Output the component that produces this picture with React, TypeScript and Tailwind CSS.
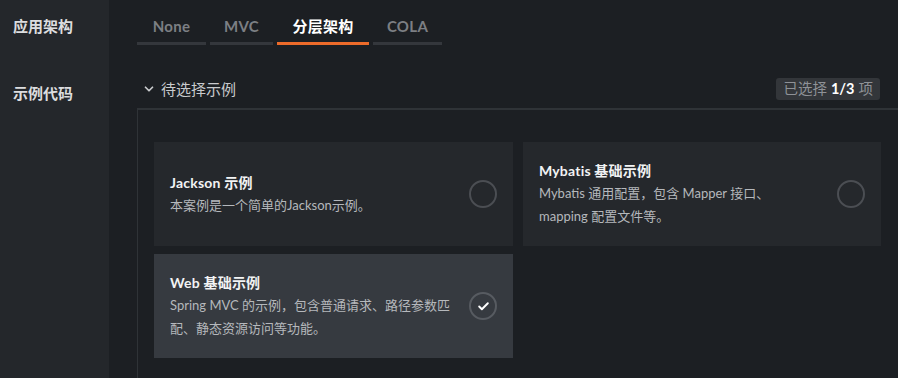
import { Check, ChevronDown } from "lucide-react";

const FONT = "font-['Lato','Noto_Sans_CJK_SC',sans-serif]";

type Example = {
  title: string;
  lines: string[];
  selected?: boolean;
};

const tabs = [
  { label: "None", w: "w-[69px]" },
  { label: "MVC", w: "w-[63px]" },
  { label: "分层架构", w: "w-[92px]", active: true },
  { label: "COLA", w: "w-[69px]" },
];

const examples: Example[] = [
  { title: "Jackson 示例", lines: ["本案例是一个简单的Jackson示例。"] },
  {
    title: "Mybatis 基础示例",
    lines: ["Mybatis 通用配置，包含 Mapper 接口、", "mapping 配置文件等。"],
  },
  {
    title: "Web 基础示例",
    lines: ["Spring MVC 的示例，包含普通请求、路径参数匹", "配、静态资源访问等功能。"],
    selected: true,
  },
];

function ExampleCard({ item }: { item: Example }) {
  return (
    <div
      className={`flex h-[104px] items-center justify-between pl-4 pr-4 ${
        item.selected ? "bg-[#363a40]" : "bg-[#25282c]"
      }`}
    >
      <div className="min-w-0">
        <p className="text-[14px] font-bold leading-[22px] tracking-[0.2px] text-[#f2f3f4]">
          {item.title}
        </p>
        {item.lines.map((line) => (
          <p key={line} className="whitespace-nowrap text-[13px] leading-[23px] text-[#b5b8bc]">
            {line}
          </p>
        ))}
      </div>
      {item.selected ? (
        <span className="flex h-[28px] w-[28px] flex-none items-center justify-center rounded-full border-2 border-[#575b61] text-white">
          <Check size={13} strokeWidth={3.5} />
        </span>
      ) : (
        <span className="h-[28px] w-[28px] flex-none rounded-full border-2 border-[#4b4e53]" />
      )}
    </div>
  );
}

export default function App() {
  return (
    <div className={`flex h-[378px] w-[898px] overflow-hidden bg-[#1c1f23] ${FONT}`}>
      {/* Label column */}
      <aside className="w-[109px] flex-none bg-[#24272b] pl-[13px]">
        <p className="pt-[15px] text-[15px] font-bold leading-[22px] text-[#dcdddf]">应用架构</p>
        <p className="pt-[45px] text-[15px] font-bold leading-[22px] text-[#dcdddf]">示例代码</p>
      </aside>

      <main className="min-w-0 flex-1 pl-[28px]">
        {/* Architecture tabs */}
        <div className="flex gap-[4px] pt-[15px]">
          {tabs.map((t) => (
            <div key={t.label} className={`${t.w} flex flex-col items-center`}>
              <span
                className={`text-[15px] font-bold leading-[22px] tracking-[0.3px] ${
                  t.active ? "text-white" : "text-[#7c7f84]"
                }`}
              >
                {t.label}
              </span>
              <span
                className={`mt-[5px] h-[3px] w-full ${t.active ? "bg-[#ec6b2a]" : "bg-[#34373c]"}`}
              />
            </div>
          ))}
        </div>

        {/* Example section header */}
        <div className="mt-[33px] flex h-[22px] items-center justify-between pr-[18px]">
          <div className="flex items-center gap-[5px] pl-[5px] text-[15px] text-[#c9cbce]">
            <ChevronDown size={14} strokeWidth={3} />
            <span>待选择示例</span>
          </div>
          <span className="rounded-[3px] bg-[#33363a] px-[7px] text-[14.5px] leading-[22px] text-[#8f9297]">
            已选择<b className="mx-[4px] font-bold text-white">1/3</b>项
          </span>
        </div>

        {/* Example box */}
        <div className="mt-[8px] h-[300px] border-l border-t-2 border-[#2f3337] pl-[16px] pr-[16px] pt-[32px]">
          <div className="grid grid-cols-[359px_358px] gap-x-[10px] gap-y-[8px]">
            {examples.map((e) => (
              <ExampleCard key={e.title} item={e} />
            ))}
          </div>
        </div>
      </main>
    </div>
  );
}
